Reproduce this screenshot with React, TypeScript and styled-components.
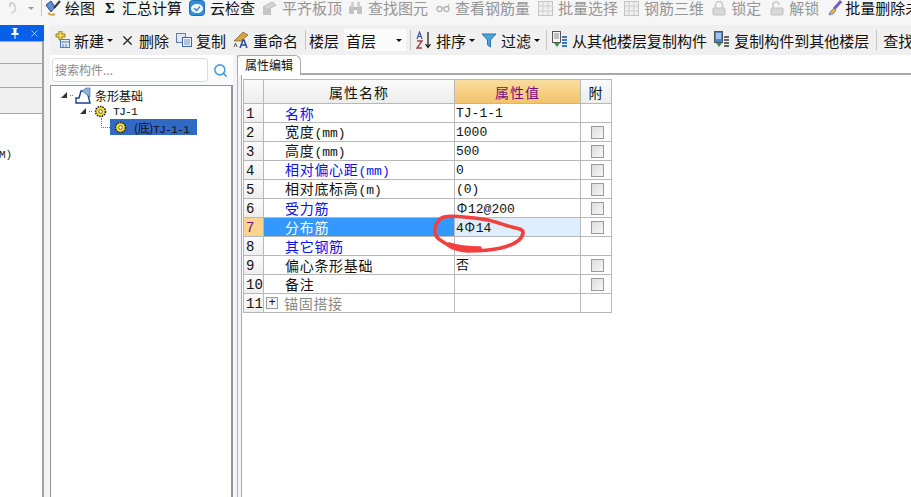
import React from "react";
import styled, { createGlobalStyle } from "styled-components";
import { Search, X } from "lucide-react";

const Global = createGlobalStyle`
  html, body { margin: 0; padding: 0; background: #fff; overflow: hidden; }
  * { box-sizing: border-box; }
`;
const CJK = `"Noto Sans CJK SC", "Liberation Sans", sans-serif`;
const Page = styled.div`
  width: 911px; height: 497px; display: flex; flex-direction: column; overflow: hidden;
  font-family: ${CJK}; font-size: 15px; color: #111; background: #f4f4f7;
`;
const TopBar = styled.div`
  height: 25px; flex: none; display: flex; align-items: flex-start; white-space: nowrap; overflow: hidden;
  background: #f6f6f6; padding-left: 7px;
`;
const TopItem = styled.span<{ $off?: boolean; $ml?: number; $gap?: number }>`
  display: inline-flex; align-items: center; gap: ${p => p.$gap ?? 5}px; flex: none; margin-left: ${p => p.$ml ?? 7}px;
  color: ${p => (p.$off ? "#959595" : "#111")}; line-height: 16px; height: 16px;
`;
const Sigma = styled.b`font-family: "Liberation Serif", serif; font-size: 15px; width: 12px;`;
const Sep = styled.span<{ $ml: number; $mr: number; $h?: number }>`
  flex: none; width: 1px; height: ${p => p.$h ?? 20}px; background: #c4c4c4;
  margin-left: ${p => p.$ml}px; margin-right: ${p => p.$mr}px;
`;
const Body = styled.div`display: flex; flex: 1; min-height: 0;`;
const Dock = styled.div`
  width: 50px; flex: none; display: flex; flex-direction: column; background: #f4f4f7;
`;
const DockTitle = styled.div`
  height: 16px; width: 44px; background: #0a5fe8; color: #fff; display: flex; align-items: center;
  justify-content: flex-end; gap: 10px; padding-right: 4px;
`;
const DockColumn = styled.div`
  width: 44px; flex: 1; display: flex; flex-direction: column; border-right: 2px solid #a2a2aa;
`;
const DockRow = styled.div<{ $h: number }>`
  height: ${p => p.$h}px; flex: none; background: #f0f0f0; border-top: 1px solid #a8a8a8;
`;
const DockWhite = styled.div`
  flex: 1; background: #fff; border-top: 1px solid #a8a8a8; padding-top: 34px;
  font: 11px/14px "Liberation Mono", monospace; color: #222; margin-left: -1px;
`;
const Work = styled.div`flex: 1; min-width: 0; display: flex; flex-direction: column;`;
const Toolbar = styled.div`
  height: 30px; flex: none; display: flex; align-items: center; white-space: nowrap; overflow: hidden;
  background: #f0f0f0; padding-left: 4px;
`;
const Tool = styled.span<{ $ml?: number }>`
  display: inline-flex; align-items: center; gap: 4px; flex: none; margin-left: ${p => p.$ml ?? 0}px;
`;
const Caret = styled.span<{ $ml?: number; $color?: string }>`
  width: 0; height: 0; margin-left: ${p => p.$ml ?? 0}px; flex: none; border: 3px solid transparent;
  border-top: 3px solid ${p => p.$color ?? "#111"}; border-bottom: 0;
`;
const UndoCaret = styled(Caret)`margin-top: 7px;`;
const FloorSelect = styled.span`
  width: 62px; height: 22px; margin-left: 5px; flex: none; display: flex; align-items: center; justify-content: space-between;
  background: #fbfbfb; padding: 0 4px 0 2px;
`;
const Panels = styled.div`flex: 1; min-height: 0; display: flex; background: #fff;`;
const TreeCol = styled.div`
  width: 183px; flex: none; display: flex; flex-direction: column; background: #f4f4f7;
`;
const SearchRow = styled.div`
  height: 30px; flex: none; display: flex; align-items: center; padding: 0 4px 0 2px; gap: 5px;
  background: linear-gradient(#fff, #fafafa);
`;
const SearchBox = styled.div`
  width: 156px; height: 24px; border: 1px solid #dcdcdc; border-radius: 3px; background: #fff; color: #8a8a8a;
  padding-left: 2px; line-height: 22px; font-size: 12px;
`;
const Tree = styled.div`
  width: 183px; flex: 1; background: #fff; border: 1px solid #8f93a0; border-right-width: 2px; border-bottom: 0; padding-top: 1px;
`;
const TreeRow = styled.div<{ $indent: number }>`
  height: 16px; display: flex; align-items: center; padding-left: ${p => p.$indent}px; white-space: nowrap;
`;
const Arrow = styled.span`
  width: 0; height: 0; flex: none; border-left: 6px solid transparent; border-bottom: 6px solid #333;
`;
const Dots = styled.span<{ $w: number }>`
  width: ${p => p.$w}px; flex: none; height: 0; border-top: 1px dotted #777; margin: 0 2px 0 3px;
`;
const Elbow = styled.span`
  width: 9px; height: 10px; flex: none; margin-top: -8px; border-left: 1px dotted #777; border-bottom: 1px dotted #777;
`;
const Selected = styled.span`
  display: inline-flex; align-items: center; height: 16px; width: 87px; background: #316ac5; color: #111; padding-left: 4px;
  font: 11.5px "Liberation Mono", "Noto Sans CJK SC", monospace; letter-spacing: -.9px; gap: 7px;
`;
const SelectedCjk = styled.span`font-size: 12px; font-family: ${CJK}; letter-spacing: -.4px;`;
const MonoName = styled.span`font: 11.5px "Liberation Mono", monospace; letter-spacing: -.9px; margin-left: 6px;`;
const TreeText = styled.span`margin-left: 4px; font-size: 12px;`;
const Gutter = styled.div`
  width: 4px; flex: none; background: #f4f4f7;
`;
const Right = styled.div`
  flex: 1; min-width: 0; display: flex; flex-direction: column; background: #f4f4f7; border-left: 1px solid #b4b4b4;
`;
const TabStrip = styled.div`
  height: 20px; flex: none; display: flex; background: #fff; border-bottom: 2px solid #a9a9a9;
`;
const Tab = styled.div`
  width: 64px; height: 20px; flex: none; background: #fff; border: 1px solid #a9a9a9; border-bottom: 0; border-radius: 3px 6px 0 0;
  text-align: center; line-height: 18px; font-size: 12px; margin-left: -1px;
`;
const Sheet = styled.div`
  flex: 1; border-left: 1px solid #a9a9a9; margin-left: 3px; padding: 4px 0 0 1px; position: relative; background: #fff;
`;
const Grid = styled.div`
  display: grid; grid-template-columns: 20px 191px 126px 31px; grid-template-rows: 24px; grid-auto-rows: 19px;
  width: 369px; border-left: 1px solid #b8b8b8; border-top: 1px solid #b8b8b8;
`;
const Cell = styled.div`
  display: flex; align-items: center; min-width: 0; border-right: 1px solid #b8b8b8; border-bottom: 1px solid #b8b8b8;
  white-space: nowrap;
`;
const HeadCell = styled(Cell)<{ $active?: boolean }>`
  justify-content: center; font-size: 14px; line-height: 16px; letter-spacing: 1px;
  background: ${p => (p.$active ? "linear-gradient(#fbdca0, #f3c468)" : "linear-gradient(#fbfbfb, #ececec)")};
  color: ${p => (p.$active ? "#7a0a78" : "#111")};
`;
const RowNum = styled(Cell)<{ $active?: boolean }>`
  padding: 1px 0 0 2px; font: 14px/16px "Liberation Mono", monospace;
  background: ${p => (p.$active ? "#fdd48e" : "linear-gradient(#fbfbfb, #eeeeee)")}; color: ${p => (p.$active ? "#7a0a78" : "#111")};
`;
const NameCell = styled(Cell)<{ $tone: "blue" | "black" | "gray"; $active?: boolean }>`
  padding-left: 21px; line-height: 16px; font-size: 14px; letter-spacing: .7px;
  background: ${p => (p.$active ? "#3398ff" : "#fff")};
  color: ${p => (p.$active ? "#fff" : p.$tone === "blue" ? "#0a10ee" : p.$tone === "gray" ? "#888" : "#111")};
`;
const Latin = styled.span`font-family: "Liberation Mono", monospace; font-size: 13px; letter-spacing: 0;`;
const ValueCell = styled(Cell)<{ $active?: boolean }>`
  padding: 2px 0 0 1px; font: 13px/16px "Liberation Mono", "Noto Sans CJK SC", monospace;
  background: ${p => (p.$active ? "#deeeff" : "#fff")}; color: #111;
`;
const Rebar = styled.span`
  display: inline-block; width: 12px; text-align: center; font-family: ${CJK}; font-size: 13px; line-height: 16px;
`;
const CheckCell = styled(Cell)`background: #fff; padding-left: 10px;`;
const Check = styled.span`
  display: block; width: 13px; height: 13px; border: 1px solid #9a9a9a;
  background: linear-gradient(135deg, #dcdcdc, #f7f7f7);
`;
const Plus = styled.span`
  display: block; flex: none; width: 12px; height: 12px; margin: 0 6px 0 -19px; border: 1px solid #999; background: #f4f4f4;
  color: #111; font: 12px/10px "Liberation Mono", monospace; text-align: center; letter-spacing: 0;
`;
const Ink = styled.svg`
  position: absolute; left: 186px; top: 138px; pointer-events: none;
`;
const Ic = styled.svg`flex: none; display: block;`;

const PinIcon = () => (
  <Ic width="8" height="11" viewBox="0 0 8 11">
    <path d="M1.5 0h5v1h-1v4h2v2H.5V5h2V1h-1zM3.5 7h1v4h-1z" fill="#fff" />
  </Ic>
);
const Undo = () => (
  <Ic width="12" height="14" viewBox="0 0 12 14"><path d="M3 2a5 5 0 1 1 1 10M3 2v4M3 2h4" stroke="#cfcfcf" strokeWidth="1.6" fill="none" /></Ic>
);
const Paint = () => (
  <Ic width="16" height="18" viewBox="0 0 16 18">
    <path d="M1 6l5-4 4 6-4 5z" fill="#5b8fd8" stroke="#2a4f90" />
    <path d="M9 9L15 2" stroke="#333" strokeWidth="2" />
    <path d="M3 14q3 3 7 1" stroke="#d9a53c" strokeWidth="2" fill="none" />
  </Ic>
);
const CloudCheck = () => (
  <Ic width="16" height="16" viewBox="0 0 16 16">
    <rect x=".5" y=".5" width="15" height="15" rx="3" fill="#2e8fdc" stroke="#1b6cb0" />
    <ellipse cx="8" cy="8.5" rx="6" ry="4.5" fill="#fff" />
    <path d="M5 8l2.5 2.5L11 6.5" stroke="#2e8fdc" strokeWidth="1.6" fill="none" />
  </Ic>
);
const GrayBlock = () => (
  <Ic width="15" height="15" viewBox="0 0 15 15">
    <path d="M1 6l9-5 4 3-9 5z" fill="#d4d4d4" stroke="#bbb" /><rect x="1" y="7" width="8" height="7" fill="#c6c6c6" />
  </Ic>
);
const Binoc = () => (
  <Ic width="15" height="14" viewBox="0 0 15 14">
    <rect x="1" y="5" width="5" height="8" rx="1" fill="#c2c2c2" /><rect x="9" y="5" width="5" height="8" rx="1" fill="#c2c2c2" />
    <rect x="3" y="1" width="3" height="5" fill="#d2d2d2" /><rect x="9" y="1" width="3" height="5" fill="#d2d2d2" /><rect x="6" y="6" width="3" height="3" fill="#bbb" />
  </Ic>
);
const Glasses = () => (
  <Ic width="14" height="10" viewBox="0 0 14 10">
    <circle cx="3.5" cy="6" r="2.5" fill="none" stroke="#b5b5b5" strokeWidth="1.3" /><circle cx="10.5" cy="6" r="2.5" fill="none" stroke="#b5b5b5" strokeWidth="1.3" /><path d="M6 5h2M12 4l1-3" stroke="#b5b5b5" />
  </Ic>
);
const GridGray = () => (
  <Ic width="15" height="15" viewBox="0 0 15 15">
    <rect x=".5" y=".5" width="14" height="14" fill="#efefef" stroke="#c4c4c4" /><path d="M5 1v13M10 1v13M1 5h13M1 10h13" stroke="#cfcfcf" />
  </Ic>
);
const Lock = ({ open }: { open?: boolean }) => (
  <Ic width="14" height="15" viewBox="0 0 14 15">
    <path d={open ? "M3 7V4a3 3 0 0 1 6 0" : "M3.5 7V4a3.5 3.5 0 0 1 7 0v3"} fill="none" stroke="#c9c9c9" strokeWidth="1.6" />
    <rect x="1" y="7" width="12" height="7" rx="1" fill="#d8d8d8" stroke="#c2c2c2" />
  </Ic>
);
const Brush = () => (
  <Ic width="14" height="16" viewBox="0 0 14 16">
    <path d="M13 1L6 9" stroke="#7a5bc8" strokeWidth="3" /><path d="M6 8l-4 4 -1 3 4-1 3-4z" fill="#e8b04a" stroke="#3a6fc0" strokeWidth=".7" />
  </Ic>
);
const NewIcon = () => (
  <Ic width="16" height="18" viewBox="0 0 16 18">
    <path d="M2 3h3V0h3v3h3v3H8v3H5V6H2z" fill="#f4cf5c" stroke="#9a7d1e" />
    <rect x="6.5" y="8.5" width="9" height="8" fill="#e4edf8" stroke="#4f7fb8" /><path d="M7 11h8M9 13v3M12 13v3" stroke="#4f7fb8" />
  </Ic>
);
const CopyIcon = () => (
  <Ic width="16" height="14" viewBox="0 0 16 14">
    <rect x=".5" y=".5" width="9" height="9" fill="#dfe9f6" stroke="#5c80b0" /><rect x="6.5" y="4.5" width="9" height="9" fill="#f3f7fc" stroke="#3d64a0" /><path d="M8 7h6M8 9h6M8 11h6" stroke="#6a8fc0" />
  </Ic>
);
const RenameIcon = () => (
  <Ic width="16" height="18" viewBox="0 0 16 18">
    <path d="M1 10L10 1l5 3-7 6z" fill="#d8a53e" stroke="#776020" strokeWidth=".7" />
    <path d="M7 17l3-8h1l3 8M8.5 14h4" stroke="#234f9a" strokeWidth="1.5" fill="none" /><path d="M1 16l1.5-4 1.5 4" stroke="#555" fill="none" />
  </Ic>
);
const SortIcon = () => (
  <Ic width="16" height="18" viewBox="0 0 16 18">
    <path d="M1 8l2.5-7L6 8M2 5.5h3" stroke="#3a5aa0" strokeWidth="1.2" fill="none" />
    <path d="M1 10h5l-5 7h5" stroke="#a04040" strokeWidth="1.4" fill="none" />
    <path d="M12 1v15M9.5 13l2.5 3.5 2.5-3.5" stroke="#111" strokeWidth="1.2" fill="none" />
  </Ic>
);
const Funnel = () => (
  <Ic width="16" height="15" viewBox="0 0 16 15">
    <path d="M1 1h14l-5.5 6v7l-3-2V7z" fill="#4aa4dc" stroke="#2a75b0" />
  </Ic>
);
const FromFloor = ({ flip }: { flip?: boolean }) => (
  <Ic width="16" height="18" viewBox="0 0 16 18">
    <rect x=".5" y=".5" width="8" height="11" fill={flip ? "#4a86d8" : "#f6f6f6"} stroke="#555" />
    <path d="M2 3h5M2 5h5M2 7h5" stroke={flip ? "#fff" : "#888"} />
    <path d="M2 12l3 4 3-4z" fill="#2f9e3f" />
    <path d="M10 6h5M10 9h5M10 12h5M10 15h5" stroke={flip ? "#666" : "#3a78c8"} strokeWidth="2" />
  </Ic>
);
const Gear = () => (
  <Ic width="13" height="13" viewBox="0 0 13 13">
    <circle cx="6.5" cy="6.5" r="5" fill="#f4e22a" stroke="#222" strokeDasharray="1.5 1" strokeWidth="1.6" />
    <circle cx="6.5" cy="6.5" r="1.8" fill="#fff" stroke="#333" strokeWidth=".7" />
  </Ic>
);
const Footing = () => (
  <Ic width="16" height="17" viewBox="0 0 16 17">
    <path d="M1 16V11h3l2-7h6l3 12z" fill="#fff" stroke="#1c3f90" strokeWidth="1.4" />
    <path d="M7 4l4-3h4v9z" fill="#8fb0d8" stroke="#4f76a8" strokeWidth=".7" />
  </Ic>
);

const rows = [
  { name: "名称", tone: "blue", value: "TJ-1-1", noCheck: true },
  { name: "宽度", unit: "(mm)", tone: "black", value: "1000" },
  { name: "高度", unit: "(mm)", tone: "black", value: "500" },
  { name: "相对偏心距", unit: "(mm)", tone: "blue", value: "0" },
  { name: "相对底标高", unit: "(m)", tone: "black", value: "(0)" },
  { name: "受力筋", tone: "blue", before: "", bar: true, value: "12@200" },
  { name: "分布筋", tone: "blue", before: "4", bar: true, value: "14", active: true },
  { name: "其它钢筋", tone: "blue", value: "", noCheck: true },
  { name: "偏心条形基础", tone: "black", value: "否" },
  { name: "备注", tone: "black", value: "" },
  { name: "锚固搭接", tone: "gray", value: "", noCheck: true, plus: true },
] as const;

export default function App() {
  return (
    <Page>
      <Global />
      <TopBar>
        <TopItem $ml={0} $off><Undo /></TopItem>
        <UndoCaret $ml={9} $color="#999" />
        <Sep $ml={7} $mr={0} $h={16} />
        <TopItem $ml={3} $gap={4}><Paint />绘图</TopItem>
        <TopItem $ml={10}><Sigma>Σ</Sigma>汇总计算</TopItem>
        <TopItem><CloudCheck />云检查</TopItem>
        <TopItem $off><GrayBlock />平齐板顶</TopItem>
        <TopItem $ml={6} $off><Binoc />查找图元</TopItem>
        <TopItem $ml={8} $off><Glasses />查看钢筋量</TopItem>
        <TopItem $ml={8} $off><GridGray />批量选择</TopItem>
        <TopItem $ml={6} $off><GridGray />钢筋三维</TopItem>
        <TopItem $ml={8} $off><Lock />锁定</TopItem>
        <TopItem $ml={9} $off><Lock open />解锁</TopItem>
        <TopItem $ml={9} $gap={3}><Brush />批量删除未使用构件</TopItem>
      </TopBar>
      <Body>
        <Dock>
          <DockTitle>
            <PinIcon />
            <X size={11} color="#fff" strokeWidth={1.4} />
          </DockTitle>
          <DockColumn>
            <DockRow $h={22} />
            <DockRow $h={24} />
            <DockRow $h={26} />
            <DockWhite>M)</DockWhite>
          </DockColumn>
        </Dock>
        <Work>
          <Toolbar>
            <Tool><NewIcon />新建</Tool>
            <Caret $ml={3} />
            <Tool $ml={7}><X size={15} color="#222" strokeWidth={2} />删除</Tool>
            <Tool $ml={7}><CopyIcon />复制</Tool>
            <Tool $ml={7}><RenameIcon />重命名</Tool>
            <Sep $ml={7} $mr={3} />
            楼层
            <FloorSelect>首层<Caret /></FloorSelect>
            <Sep $ml={4} $mr={5} />
            <Tool><SortIcon />排序</Tool>
            <Caret $ml={3} />
            <Tool $ml={6}><Funnel />过滤</Tool>
            <Caret $ml={3} />
            <Sep $ml={6} $mr={5} />
            <Tool><FromFloor />从其他楼层复制构件</Tool>
            <Tool $ml={7}><FromFloor flip />复制构件到其他楼层</Tool>
            <Sep $ml={7} $mr={6} />
            查找
          </Toolbar>
          <Panels>
            <TreeCol>
              <SearchRow>
                <SearchBox>搜索构件...</SearchBox>
                <Search size={15} color="#4a9ee0" strokeWidth={2.5} />
              </SearchRow>
              <Tree>
                <TreeRow $indent={10}><Arrow /><Dots $w={3} /><Footing /><TreeText>条形基础</TreeText></TreeRow>
                <TreeRow $indent={29}><Arrow /><Dots $w={3} /><Gear /><MonoName>TJ-1</MonoName></TreeRow>
                <TreeRow $indent={50}><Elbow /><Selected><Gear /><span><SelectedCjk>(底)</SelectedCjk>TJ-1-1</span></Selected></TreeRow>
              </Tree>
            </TreeCol>
            <Gutter />
            <Right>
              <TabStrip><Tab>属性编辑</Tab></TabStrip>
              <Sheet>
                <Grid>
                  <HeadCell />
                  <HeadCell>属性名称</HeadCell>
                  <HeadCell $active>属性值</HeadCell>
                  <HeadCell>附</HeadCell>
                  {rows.map((r, i) => (
                    <React.Fragment key={r.name}>
                      <RowNum $active={"active" in r}>{i + 1}</RowNum>
                      <NameCell $tone={r.tone} $active={"active" in r}>
                        {"plus" in r && <Plus>+</Plus>}
                        <span>{r.name}{"unit" in r && <Latin>{r.unit}</Latin>}</span>
                      </NameCell>
                      <ValueCell $active={"active" in r}>
                        <span>{"bar" in r && <>{r.before}<Rebar>Φ</Rebar></>}{r.value}</span>
                      </ValueCell>
                      <CheckCell>{!("noCheck" in r) && <Check />}</CheckCell>
                    </React.Fragment>
                  ))}
                </Grid>
                <Ink width="100" height="45" viewBox="0 0 100 45">
                  <path d="M80 13C88 15 96 16 95 20 94 28 85 32 73 35 60 38 48 38 40 38 30 37 24 35 20 32 14 28 8 26 7 20 6 13 10 6 16 4 24 2 40 4 60 7 68 9 74 11 80 13ZM21 31C33 35 42 35 52 35" fill="none" stroke="#f43f3f" strokeWidth="3.6" strokeLinecap="round" />
                </Ink>
              </Sheet>
            </Right>
          </Panels>
        </Work>
      </Body>
    </Page>
  );
}
